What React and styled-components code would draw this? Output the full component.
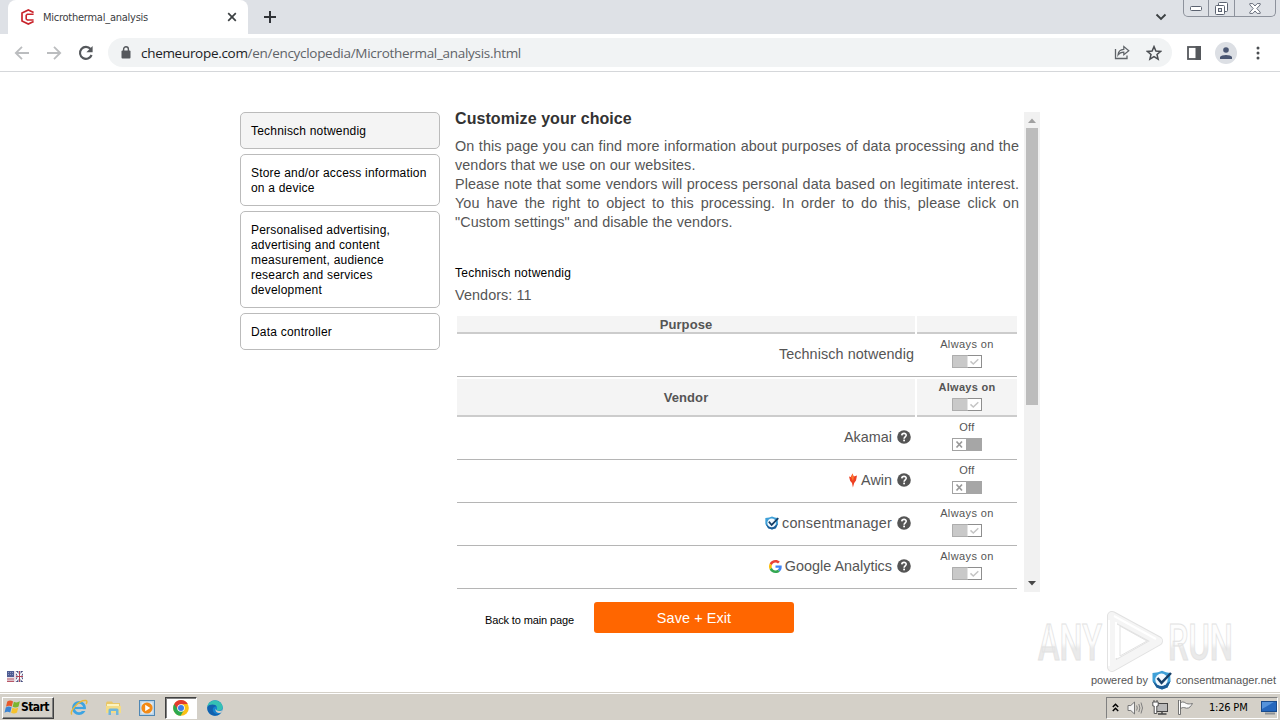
import styled, { createGlobalStyle, css } from "styled-components"

const GlobalStyle = createGlobalStyle`
    * {
        box-sizing: border-box;
    }

    body {
        margin: 0;
        overflow: hidden;
        background: #fff;
        font-family: "Liberation Sans", Arial, sans-serif;
    }

    p, h1, h2 {
        margin: 0;
    }

    svg {
        display: block;
        flex-shrink: 0;
    }
`

const purposes = [
    { name: "Technisch notwendig", active: true },
    { name: "Store and/or access information on a device" },
    { name: "Personalised advertising, advertising and content measurement, audience research and services development" },
    { name: "Data controller" }
]

const ConsentLogo = ({ size }) => (
    <svg width={size} height={size} viewBox="0 0 20 20">
        <path d="M0.5 3 L6 2.2 L10 0.8 L14 2.2 L18 3 L18.6 11 L15.5 17.5 L10 19.4 L4.5 17.5 L0.5 11Z" fill="#3fa0d8" />
        <path d="M0.5 11 L4.5 17.5 L10 19.4 L15.5 17.5 L18.6 11 L14 14 L10 16 L5 14.5Z" fill="#1c5c96" />
        <circle cx="9.5" cy="9.8" r="6.2" fill="#f4faff" />
        <path d="M5.5 8 L9.5 12.8 L19 3" fill="none" stroke="#163f68" strokeWidth="2.5" />
    </svg>
)

const AwinLogo = () => (
    <svg width="10" height="15" viewBox="0 0 10 15">
        <path d="M1 3.4 L2.8 4 L4.4 0.6 L5.8 3.6 L9 2.6 L8 7.5 L6.2 10 L4.9 14.5 L4 10 L2.2 8Z" fill="#ee4023" />
        <path d="M4.4 0.6 L5.8 4.4 L5 8 L3.4 4.6Z" fill="#ff7a30" />
    </svg>
)

const GoogleLogo = ({ size }) => (
    <svg width={size} height={size} viewBox="0 0 48 48">
        <path fill="#EA4335" d="M24 9.5c3.54 0 6.71 1.22 9.21 3.6l6.85-6.85C35.9 2.38 30.47 0 24 0 14.62 0 6.51 5.38 2.56 13.22l7.98 6.19C12.43 13.72 17.74 9.5 24 9.5z" />
        <path fill="#4285F4" d="M46.98 24.55c0-1.57-.15-3.09-.38-4.55H24v9.02h12.94c-.58 2.96-2.26 5.48-4.78 7.18l7.73 6c4.51-4.18 7.09-10.36 7.09-17.65z" />
        <path fill="#FBBC05" d="M10.53 28.59c-.48-1.45-.76-2.99-.76-4.59s.27-3.14.76-4.59l-7.98-6.19C.92 16.46 0 20.12 0 24c0 3.88.92 7.54 2.56 10.78l7.97-6.19z" />
        <path fill="#34A853" d="M24 48c6.48 0 11.93-2.13 15.89-5.81l-7.73-6c-2.15 1.45-4.92 2.3-8.16 2.3-6.26 0-11.57-4.22-13.47-9.91l-7.98 6.19C6.51 42.62 14.62 48 24 48z" />
    </svg>
)

const HelpIcon = () => (
    <svg width="14" height="14" viewBox="0 0 14 14">
        <circle cx="7" cy="7" r="6.8" fill="#555" />
        <path d="M4.8 5.4 C4.9 2.6 9.3 2.7 9.2 5.3 C9.1 6.8 7.1 6.9 7.1 8.7" fill="none" stroke="#fff" strokeWidth="1.6" />
        <rect x="6.2" y="9.6" width="1.8" height="1.7" fill="#fff" />
    </svg>
)

const ChromeLogo = () => (
    <svg width="16" height="16" viewBox="0 0 16 16">
        <circle cx="8" cy="8" r="7.8" fill="#fbc116" />
        <path d="M8 8 L1.2 4.1 A7.8 7.8 0 0 0 7.6 15.8 L11.2 9.8Z" fill="#2da94f" />
        <path d="M1.2 4.1 A7.8 7.8 0 0 1 14.8 4.1 L8 4.2 L4.8 9.6Z" fill="#e33b2e" />
        <circle cx="8" cy="8" r="3.8" fill="#fff" />
        <circle cx="8" cy="8" r="3" fill="#3f7de8" />
    </svg>
)

const EdgeLogo = () => (
    <svg width="16" height="16" viewBox="0 0 16 16">
        <circle cx="8" cy="8" r="7.8" fill="#1582cf" />
        <path d="M0.4 7 C1 -1.5 14.5 -2 15.7 7.2 C15.6 10.8 11 11.4 9.4 10 C11 8 9.8 5.4 7 5.2 C4 4.8 1.4 5.4 0.4 7Z" fill="#35c1b4" />
        <path d="M0.4 7 C2.5 3.8 8.5 4 9.8 6.6 C6.4 5.8 5.2 8.6 6 11 C6.8 13.6 10 14.8 13.5 13.4 C8 18.4 -0.4 14.5 0.4 7Z" fill="#1261ae" />
        <path d="M8.4 8.2 C8.6 11.2 13 12 16 9.4 L14.2 12.8 C11 13.4 8 12.2 8.4 8.2Z" fill="#d4d0c8" />
    </svg>
)

const ExplorerLogo = () => (
    <svg width="18" height="17" viewBox="0 0 18 17">
        <circle cx="9" cy="9" r="5.6" fill="none" stroke="#3da4e2" strokeWidth="2.8" />
        <path d="M5 9 H14.5" stroke="#3da4e2" strokeWidth="2.2" />
        <path d="M11 10.2 H17 V12 H11Z" fill="#d4d0c8" />
        <path d="M2 15.5 C-1.5 13 9 0.5 16 1.5 C17.8 2 16.5 4.5 16 5" fill="none" stroke="#e8b83c" strokeWidth="1.4" />
    </svg>
)

const FolderLogo = () => (
    <svg width="17" height="16" viewBox="0 0 17 16">
        <path d="M1 3 L2 1.5 H7 L8 3 H15 V13 H1Z" fill="#e9c768" />
        <path d="M2 4 H14 V7 H2Z" fill="#fbf3c0" />
        <path d="M1 6 H16 V13 H1Z" fill="#f4dc86" />
        <path d="M3.5 15 V10 Q3.5 8.5 5 8.5 H12 Q13.5 8.5 13.5 10 V15 H11 V11 H6 V15Z" fill="#6fb6dc" />
    </svg>
)

const MediaLogo = () => (
    <svg width="16" height="16" viewBox="0 0 16 16">
        <rect x="0.5" y="0.5" width="15" height="15" fill="#b9d3e8" stroke="#4f87b4" />
        <rect x="2.5" y="2.5" width="11" height="11" fill="#e7eff5" />
        <circle cx="8" cy="8" r="5.6" fill="#f38a16" />
        <path d="M6.2 4.8 L11.2 8 L6.2 11.2Z" fill="#fff" />
    </svg>
)

const WindowsLogo = () => (
    <svg width="17" height="16" viewBox="0 0 15 15">
        <path d="M2.6 2.4 C4.5 1 6.3 1.3 8 2.3 L6.8 7 C5.2 6 3.3 6 1.4 7.2Z" fill="#e8592b" />
        <path d="M8.8 2.6 C10.7 3.6 12.4 3.5 14.4 2.2 L13.2 7 C11.4 8.3 9.3 8.2 7.6 7.3Z" fill="#7bb52f" />
        <path d="M1.2 8 C3 6.8 4.9 6.9 6.6 7.8 L5.4 12.6 C3.6 11.6 1.9 11.6 0 12.8Z" fill="#3b84d3" />
        <path d="M7.4 8.1 C9.3 9.1 11 9.1 12.9 7.9 L11.7 12.6 C9.9 13.9 8 13.8 6.2 12.9Z" fill="#f6c22d" />
    </svg>
)

const Switch = ({ on }) => (
    <svg width="30" height="13" viewBox="0 0 30 13">
        {on ? (
            <>
                <rect x="0.5" y="0.5" width="29" height="12" fill="#fff" stroke="#8e8e8e" />
                <rect x="0" y="0" width="15.5" height="13" fill="#c9c9c9" />
                <path d="M0.5 13 V0.5 H16 M0 12.5 H16" fill="none" stroke="#adadad" />
                <path d="M18.5 6.4 L21.3 9 L26.3 4.2" fill="none" stroke="#c4c4c4" strokeWidth="1.5" />
            </>
        ) : (
            <>
                <rect x="0.5" y="0.5" width="29" height="12" fill="#fff" stroke="#a2a2a2" />
                <rect x="14" y="0" width="16" height="13" fill="#a6a6a6" />
                <path d="M4.5 3.5 L10 9.5 M10 3.5 L4.5 9.5" stroke="#999" strokeWidth="1.7" />
            </>
        )}
    </svg>
)

const TabStripBar = () => (
    <TabStrip>
        <Tab>
            <svg width="14" height="16" viewBox="0 0 14 16">
                <path d="M12.6 3.6 L7.3 1 L1 4 V12 L7.3 15 L12.6 12.4" fill="none" stroke="#c9252c" strokeWidth="1.7" />
                <path d="M12.6 5.2 H6.3 L5.2 6.3 V9.9 L6.3 11 H12.6" fill="none" stroke="#c9252c" strokeWidth="1.6" />
            </svg>
            <TabTitle>Microthermal_analysis</TabTitle>
            <svg width="10" height="10" viewBox="0 0 10 10">
                <path d="M1.2 1.2 L8.8 8.8 M8.8 1.2 L1.2 8.8" stroke="#3c4043" strokeWidth="1.7" />
            </svg>
        </Tab>
        <NewTab>
            <svg width="12" height="12" viewBox="0 0 12 12">
                <path d="M6 0 V12 M0 6 H12" stroke="#303338" strokeWidth="2" />
            </svg>
        </NewTab>
        <TabSearch>
            <svg width="12" height="8" viewBox="0 0 12 8">
                <path d="M1.5 1.5 L6 6 L10.5 1.5" fill="none" stroke="#3c4043" strokeWidth="1.9" />
            </svg>
        </TabSearch>
        <WindowButtons>
            <WindowButton $width={24}>
                <svg width="13" height="6" viewBox="0 0 13 6">
                    <rect x="0.5" y="1.5" width="11" height="4" rx="1" fill="#fff" stroke="#5b6270" />
                </svg>
            </WindowButton>
            <WindowButton $width={26}>
                <svg width="13" height="13" viewBox="0 0 13 13">
                    <rect x="3.5" y="0.5" width="9" height="9" rx="1" fill="#fff" stroke="#5b6270" />
                    <rect x="0.5" y="3.5" width="9" height="9" rx="1" fill="#fff" stroke="#5b6270" />
                    <rect x="3.5" y="6.5" width="3" height="3" fill="#dee1e6" stroke="#5b6270" />
                </svg>
            </WindowButton>
            <WindowButton $width={41}>
                <svg width="12" height="11" viewBox="0 0 12 11">
                    <path d="M0.8 0.6 H3.8 L6 3 L8.2 0.6 H11.2 V1.8 L7.8 5.5 L11.2 9.2 V10.4 H8.2 L6 8 L3.8 10.4 H0.8 V9.2 L4.2 5.5 L0.8 1.8Z" fill="#fff" stroke="#5b6270" strokeWidth="0.9" />
                </svg>
            </WindowButton>
        </WindowButtons>
    </TabStrip>
)

const AddressBar = () => (
    <Toolbar>
        <NavButtons>
            <svg width="16" height="16" viewBox="0 0 16 16">
                <path d="M15 8 H2 M8 1.8 L1.8 8 L8 14.2" fill="none" stroke="#bbbdbf" strokeWidth="1.8" />
            </svg>
            <svg width="16" height="16" viewBox="0 0 16 16">
                <path d="M1 8 H14 M8 1.8 L14.2 8 L8 14.2" fill="none" stroke="#bbbdbf" strokeWidth="1.8" />
            </svg>
            <svg width="16" height="16" viewBox="0 0 16 16">
                <path d="M13.6 10 A6 6 0 1 1 12.6 4" fill="none" stroke="#55585c" strokeWidth="2.1" />
                <path d="M14.6 1 V7.2 H8.4Z" fill="#55585c" />
            </svg>
        </NavButtons>
        <Omnibox>
            <svg width="10" height="13" viewBox="0 0 10 13">
                <rect x="0.5" y="4.5" width="9" height="8" rx="1" fill="#55585c" />
                <path d="M2.6 5 V3.2 a2.4 2.4 0 0 1 4.8 0 V5" fill="none" stroke="#55585c" strokeWidth="1.4" />
            </svg>
            <Url><b>chemeurope.com</b>/en/encyclopedia/Microthermal_analysis.html</Url>
            <svg width="16" height="15" viewBox="0 0 16 15">
                <path d="M1.5 4 V13.5 H13 V10.5" fill="none" stroke="#5f6368" strokeWidth="1.3" />
                <path d="M4 10 C4.3 6.2 6.6 4.4 9.8 4.3 V1.6 L14.8 5.8 L9.8 9.8 V7.2 C7.2 7.2 5.4 8 4 10Z" fill="none" stroke="#5f6368" strokeWidth="1.2" />
            </svg>
            <StarIcon width="16" height="16" viewBox="0 0 16 16">
                <path d="M8 1.6 L9.9 6 L14.6 6.4 L11 9.5 L12.1 14.1 L8 11.6 L3.9 14.1 L5 9.5 L1.4 6.4 L6.1 6Z" fill="none" stroke="#4b4e52" strokeWidth="1.5" />
            </StarIcon>
        </Omnibox>
        <svg width="14" height="14" viewBox="0 0 14 14">
            <rect x="1" y="1" width="12" height="12" fill="#fff" stroke="#55585c" strokeWidth="1.8" />
            <rect x="8.5" y="0" width="5.5" height="14" fill="#55585c" />
        </svg>
        <Avatar>
            <svg width="12" height="12" viewBox="0 0 12 12">
                <circle cx="6" cy="3" r="2.8" fill="#4a5672" />
                <path d="M0 12 V10 C1 7.2 11 7.2 12 10 V12Z" fill="#4a5672" />
            </svg>
        </Avatar>
        <svg width="4" height="14" viewBox="0 0 4 14">
            <circle cx="2" cy="2" r="1.5" fill="#4b4e52" />
            <circle cx="2" cy="7" r="1.5" fill="#4b4e52" />
            <circle cx="2" cy="12" r="1.5" fill="#4b4e52" />
        </svg>
    </Toolbar>
)

const StateCell = ({ on, bold }) => (
    <State $bold={bold}>
        <span>{on ? "Always on" : "Off"}</span>
        <Switch on={on} />
    </State>
)

const VendorRow = ({ name, on, logo, spacing }) => (
    <Row>
        <NameCell $vendor>
            {logo}
            <VendorName $spacing={spacing}>{name}</VendorName>
            <HelpIcon />
        </NameCell>
        <StateCell on={on} />
    </Row>
)

const ConsentTable = () => (
    <Table>
        <HeaderRow $height={18}>
            <HeaderCell>Purpose</HeaderCell>
            <HeaderState />
        </HeaderRow>
        <Row>
            <NameCell>Technisch notwendig</NameCell>
            <StateCell on />
        </Row>
        <HeaderRow $height={38} $spaced>
            <HeaderCell>Vendor</HeaderCell>
            <HeaderState>
                <StateCell on bold />
            </HeaderState>
        </HeaderRow>
        <VendorRow name="Akamai" />
        <VendorRow name="Awin" logo={<AwinLogo />} />
        <VendorRow name="consentmanager" on logo={<ConsentLogo size={14} />} spacing="0.2px" />
        <VendorRow name="Google Analytics" on logo={<GoogleLogo size={13} />} />
    </Table>
)

const Watermark = () => (
    <WatermarkSvg width="210" height="70" viewBox="0 0 210 70">
        <defs>
            <linearGradient id="mark" x1="0" y1="0" x2="0" y2="1">
                <stop offset="0.5" stopColor="#fdfdfd" />
                <stop offset="0.6" stopColor="#eaeaea" />
            </linearGradient>
        </defs>
        <g fill="url(#mark)" stroke="#e2e2e2" strokeWidth="1" fontFamily="Roboto, sans-serif" fontWeight="500" fontSize="50">
            <text x="4" y="52" textLength="64" lengthAdjust="spacingAndGlyphs">ANY</text>
            <text x="134" y="52" textLength="65" lengthAdjust="spacingAndGlyphs">RUN</text>
        </g>
        <path d="M78 8 L124 33 L78 59Z" fill="none" stroke="#e2e2e2" strokeWidth="10" strokeLinejoin="round" />
        <path d="M78 8 L124 33 L78 59Z" fill="none" stroke="#f5f5f5" strokeWidth="8" strokeLinejoin="round" />
        <path d="M86 18 L113 33 L86 48Z" fill="#fff" stroke="#e2e2e2" />
        <path d="M75 12 V58 M82 14 V50 M80 8 L122 31" stroke="#fff" strokeWidth="2" />
    </WatermarkSvg>
)

const SystemTaskbar = () => (
    <Taskbar>
        <StartButton>
            <WindowsLogo />
            Start
        </StartButton>
        <QuickLaunch>
            <LaunchItem><ExplorerLogo /></LaunchItem>
            <LaunchItem><FolderLogo /></LaunchItem>
            <LaunchItem><MediaLogo /></LaunchItem>
            <LaunchItem $active><ChromeLogo /></LaunchItem>
            <LaunchItem><EdgeLogo /></LaunchItem>
        </QuickLaunch>
        <Tray>
            <svg width="7" height="9" viewBox="0 0 7 9">
                <path d="M0.8 4 L3.5 1.3 L6.2 4 M0.8 8 L3.5 5.3 L6.2 8" fill="none" stroke="#000" strokeWidth="1.5" />
            </svg>
            <TrayIcon width="17" height="14" viewBox="0 0 17 14">
                <path d="M1 4.5 H3.8 L7.5 1 V13 L3.8 9.5 H1Z" fill="#f4f4f4" stroke="#777" />
                <path d="M9.6 4.5 Q11 7 9.6 9.5 M11.8 3 Q14 7 11.8 11 M14 1.5 Q17 7 14 12.5" fill="none" stroke="#808080" />
            </TrayIcon>
            <TrayIcon width="17" height="15" viewBox="0 0 17 15">
                <rect x="4.5" y="3.5" width="11" height="8" fill="#b9b9b9" stroke="#444" />
                <path d="M6 14 H14.5 M10 12 V14" stroke="#444" strokeWidth="1.4" />
                <path d="M0.8 2 H6.2 V6 H4.8 V13.5 H2.2 V6 H0.8Z M2 0 V2 M5 0 V2" fill="#fff" stroke="#555" />
            </TrayIcon>
            <TrayIcon width="17" height="15" viewBox="0 0 17 15">
                <path d="M3.5 2.5 C7 1 8 3 9.5 3.5 C11.5 4.2 13 4 15.5 3.5 C14 6 12.5 8.5 9.5 8.2 C7 7.5 6 7 3.5 8.5Z" fill="#fafafa" stroke="#777" />
                <path d="M1.5 0 H3.5 V14.5 H1.5Z" fill="#fff" stroke="#666" strokeWidth="0.9" />
            </TrayIcon>
            <Clock>1:26 PM</Clock>
            <svg width="16" height="14" viewBox="0 0 16 14">
                <rect x="0.5" y="0.5" width="15" height="10" fill="#2567bd" stroke="#194b8c" />
                <path d="M1 1 H13 L1 8Z" fill="#5593db" />
                <path d="M4 12.5 H14" stroke="#8d9297" strokeWidth="2" />
            </svg>
        </Tray>
    </Taskbar>
)

export default function App() {
    return (
        <Desktop>
            <GlobalStyle />
            <TabStripBar />
            <AddressBar />
            <Page>
                <Dialog>
                    <PurposeList>
                        {purposes.map(purpose => (
                            <PurposeButton key={purpose.name} $active={purpose.active}>{purpose.name}</PurposeButton>
                        ))}
                    </PurposeList>
                    <Details>
                        <Title>Customize your choice</Title>
                        <Intro>
                            On this page you can find more information about purposes of data processing and the vendors that we use on our websites.
                        </Intro>
                        <Intro>
                            Please note that some vendors will process personal data based on legitimate interest. You have the right to object to this processing. In order to do this, please click on "Custom settings" and disable the vendors.
                        </Intro>
                        <PurposeName>Technisch notwendig</PurposeName>
                        <VendorCount>Vendors: 11</VendorCount>
                        <ConsentTable />
                    </Details>
                    <Scrollbar>
                        <svg width="8" height="5" viewBox="0 0 8 5"><path d="M0 5 L4 0.6 L8 5Z" fill="#a0a0a0" /></svg>
                        <ScrollThumb />
                        <svg width="8" height="5" viewBox="0 0 8 5"><path d="M0 0 H8 L4 4.4Z" fill="#484848" /></svg>
                    </Scrollbar>
                </Dialog>
                <Actions>
                    <BackLink>Back to main page</BackLink>
                    <SaveButton>Save + Exit</SaveButton>
                </Actions>
                <PageFooter>
                    <svg width="16" height="11" viewBox="0 0 16 11">
                        <rect width="16" height="11" fill="#e8dfe6" />
                        <rect width="7" height="6" fill="#4e5c93" />
                        <path d="M0 8 H7 M0 10.3 H7" stroke="#b85767" strokeWidth="1.2" />
                        <path d="M1 1.5 H7 M1 3.5 H7" stroke="#a7b0cf" strokeWidth="0.7" strokeDasharray="1 1" />
                        <path d="M9 0 H16 V11 H9Z" fill="#454b7d" />
                        <path d="M9 1 L16 10 M16 1 L9 10" stroke="#fff" strokeWidth="1.5" />
                        <path d="M12.5 0 V11 M9 5.5 H16" stroke="#fff" strokeWidth="2.2" />
                        <path d="M12.5 0 V11 M9 5.5 H16" stroke="#b04558" strokeWidth="1" />
                    </svg>
                    <PoweredBy>
                        <span>powered by</span>
                        <ConsentLogo size={20} />
                        <span>consentmanager.net</span>
                    </PoweredBy>
                </PageFooter>
                <Watermark />
            </Page>
            <SystemTaskbar />
        </Desktop>
    )
}

const Desktop = styled.div`
    width: 1280px;
    height: 720px;
    display: flex;
    flex-direction: column;
    overflow: hidden;
`

const TabStrip = styled.div`
    display: flex;
    height: 34px;
    padding: 0 4px 0 8px;
    background: #dee1e6;
`

const Tab = styled.div`
    display: flex;
    align-items: center;
    width: 240px;
    padding: 0 11px 0 13px;
    background: #fff;
    border-radius: 8px 8px 0 0;
`

const TabTitle = styled.span`
    flex: 1;
    margin-left: 8px;
    color: #3c4043;
    font-family: "DejaVu Sans Condensed", "DejaVu Sans", sans-serif;
    font-stretch: condensed;
    font-size: 11px;
    letter-spacing: -0.25px;
`

const NewTab = styled.div`
    display: flex;
    align-items: center;
    margin-left: 16px;
`

const TabSearch = styled.div`
    display: flex;
    align-items: center;
    margin: 0 16px 0 auto;
`

const WindowButtons = styled.div`
    display: flex;
    height: 17px;
    border: 1px solid #8d929c;
    border-top: 0;
    border-radius: 0 0 5px 5px;
`

const WindowButton = styled.div`
    display: flex;
    align-items: center;
    justify-content: center;
    width: ${props => props.$width}px;

    & + & {
        border-left: 1px solid #8d929c;
    }
`

const Toolbar = styled.div`
    display: flex;
    align-items: center;
    height: 38px;
    padding: 0 20px 0 14px;
    border-bottom: 1px solid #d5d7da;
    background: #fff;
`

const NavButtons = styled.div`
    display: flex;
    gap: 16px;
    margin-right: 14px;
`

const Omnibox = styled.div`
    display: flex;
    align-items: center;
    flex-shrink: 0;
    width: 1064px;
    height: 29px;
    margin-right: 15px;
    padding: 0 10px 0 13px;
    border-radius: 15px;
    background: #f1f3f4;
`

const Url = styled.span`
    flex: 1;
    margin-left: 10px;
    color: #5f6368;
    font-family: "Open Sans", sans-serif;
    font-size: 13.5px;
    letter-spacing: -0.3px;

    b {
        color: #202124;
        font-weight: 400;
    }
`

const StarIcon = styled.svg`
    margin-left: 16px;
`

const Avatar = styled.div`
    display: flex;
    align-items: center;
    justify-content: center;
    width: 22px;
    height: 22px;
    margin: 0 19px 0 14px;
    border-radius: 50%;
    background: #dcdfe4;
`

const Page = styled.main`
    position: relative;
    display: flex;
    flex-direction: column;
    height: 620px;
    padding-top: 40px;
    background: #fff;
`

const Dialog = styled.section`
    display: flex;
    width: 800px;
    height: 480px;
    margin: 0 auto;
`

const PurposeList = styled.div`
    display: flex;
    flex-direction: column;
    gap: 5px;
    width: 200px;
    margin-right: 15px;
`

const PurposeButton = styled.div`
    padding: 11px 10px 9px;
    border: 1px solid #bbb;
    border-radius: 5px;
    background: ${props => props.$active ? '#f4f4f4' : '#fff'};
    color: #000;
    font-size: 12px;
    line-height: 15px;
    letter-spacing: 0.2px;
`

const Details = styled.div`
    width: 564px;
    margin-right: 5px;
    color: #555;
    font-size: 14.4px;
    line-height: 19px;
    letter-spacing: 0.08px;
`

const Title = styled.h1`
    height: 28px;
    margin-top: -3px;
    color: #333;
    font-size: 16px;
    line-height: 19px;
`

const Intro = styled.p`
    text-align: justify;
`

const PurposeName = styled.h2`
    margin-top: 32px;
    color: #000;
    font-size: 12px;
    font-weight: 400;
    line-height: 18px;
    letter-spacing: 0.25px;
`

const VendorCount = styled.p`
    margin-top: 3px;
    line-height: 20px;
`

const Table = styled.div`
    display: flex;
    flex-direction: column;
    margin: 11px 2px 0;
`

const HeaderRow = styled.div`
    display: flex;
    gap: 2px;
    height: ${props => props.$height}px;
    margin-top: ${props => props.$spaced ? 2 : 0}px;
`

const headerCell = css`
    border-bottom: 2px solid #ccc;
    background: #f4f4f4;
`

const HeaderCell = styled.div`
    ${headerCell}
    display: flex;
    align-items: center;
    justify-content: center;
    width: 458px;
    padding-top: 2px;
    font-size: 13px;
    font-weight: 700;
    line-height: 14px;
`

const HeaderState = styled.div`
    ${headerCell}
    width: 100px;
`

const Row = styled.div`
    display: flex;
    gap: 2px;
    height: 43px;
    border-bottom: 1px solid #b5b5b5;
`

const NameCell = styled.div`
    display: flex;
    align-items: center;
    justify-content: flex-end;
    width: 458px;
    padding: 0 ${props => props.$vendor ? 4 : 1}px 2px 0;
`

const VendorName = styled.span`
    margin: 0 5px 0 3px;
    letter-spacing: ${props => props.$spacing ?? '0'};
`

const State = styled.div`
    display: flex;
    flex-direction: column;
    align-items: center;
    gap: 4px;
    width: 100px;
    padding-top: ${props => props.$bold ? 1 : 3}px;
    font-size: 11px;
    font-weight: ${props => props.$bold ? 700 : 400};
    line-height: 14px;
    letter-spacing: ${props => props.$bold ? 0.3 : 0.4}px;
`

const Scrollbar = styled.div`
    display: flex;
    flex-direction: column;
    align-items: center;
    width: 16px;
    padding: 6px 0;
    background: #f1f1f1;

    svg:last-child {
        margin-top: auto;
    }
`

const ScrollThumb = styled.div`
    width: 12px;
    height: 277px;
    margin-top: 5px;
    background: #bcbcbc;
`

const Actions = styled.div`
    display: flex;
    align-items: center;
    height: 31px;
    margin: 10px 0 0 485px;
`

const BackLink = styled.span`
    width: 109px;
    padding-top: 5px;
    color: #000;
    font-size: 11px;
    letter-spacing: -0.13px;
`

const SaveButton = styled.div`
    width: 200px;
    height: 31px;
    border-radius: 3px;
    background: #f60;
    color: #fff;
    font-size: 14.4px;
    line-height: 32px;
    letter-spacing: 0.1px;
    text-align: center;
`

const PageFooter = styled.footer`
    display: flex;
    justify-content: space-between;
    align-items: center;
    height: 24px;
    margin-top: auto;
    padding: 0 4px 0 7px;

    > svg {
        margin-bottom: 7px;
    }
`

const PoweredBy = styled.div`
    display: flex;
    align-items: center;
    gap: 4px;
    color: #555;
    font-size: 11px;
    letter-spacing: 0.02px;
`

const WatermarkSvg = styled.svg`
    position: absolute;
    left: 1034px;
    top: 536px;
`

const Taskbar = styled.div`
    display: flex;
    align-items: center;
    height: 28px;
    padding: 2px 0 0 2px;
    border-top: 1px solid #d4d0c8;
    box-shadow: inset 0 1px #fff;
    background: #d4d0c8;
`

const StartButton = styled.div`
    display: flex;
    align-items: center;
    width: 52px;
    height: 22px;
    padding: 0 0 1px 1px;
    border: 1px solid;
    border-color: #fff #404040 #404040 #fff;
    box-shadow: inset -1px -1px #808080;
    font-family: "DejaVu Sans Condensed", "DejaVu Sans", sans-serif;
    font-stretch: condensed;
    font-size: 12px;
    font-weight: 700;
    letter-spacing: -0.6px;
`

const QuickLaunch = styled.div`
    display: flex;
    gap: 2px;
    margin-left: 9px;
`

const LaunchItem = styled.div`
    display: flex;
    align-items: center;
    justify-content: center;
    width: 32px;
    height: 22px;
    border: 1px solid transparent;
    ${props => props.$active && css`
        border-color: #404040 #fff #fff #404040;
        background: #fff;
        box-shadow: inset 1px 1px #808080;
    `}
`

const Tray = styled.div`
    display: flex;
    align-items: center;
    width: 172px;
    height: 22px;
    margin: 0 2px 0 auto;
    padding: 0 0 0 5px;
    border: 1px solid;
    border-color: #808080 #fff #fff #808080;
`

const TrayIcon = styled.svg`
    margin-left: 8px;
`

const Clock = styled.span`
    width: 41px;
    margin: 0 11px 0 15px;
    color: #000;
    font-family: "DejaVu Sans Condensed", "DejaVu Sans", sans-serif;
    font-stretch: condensed;
    font-size: 11px;
    letter-spacing: -0.2px;
    white-space: nowrap;
`
